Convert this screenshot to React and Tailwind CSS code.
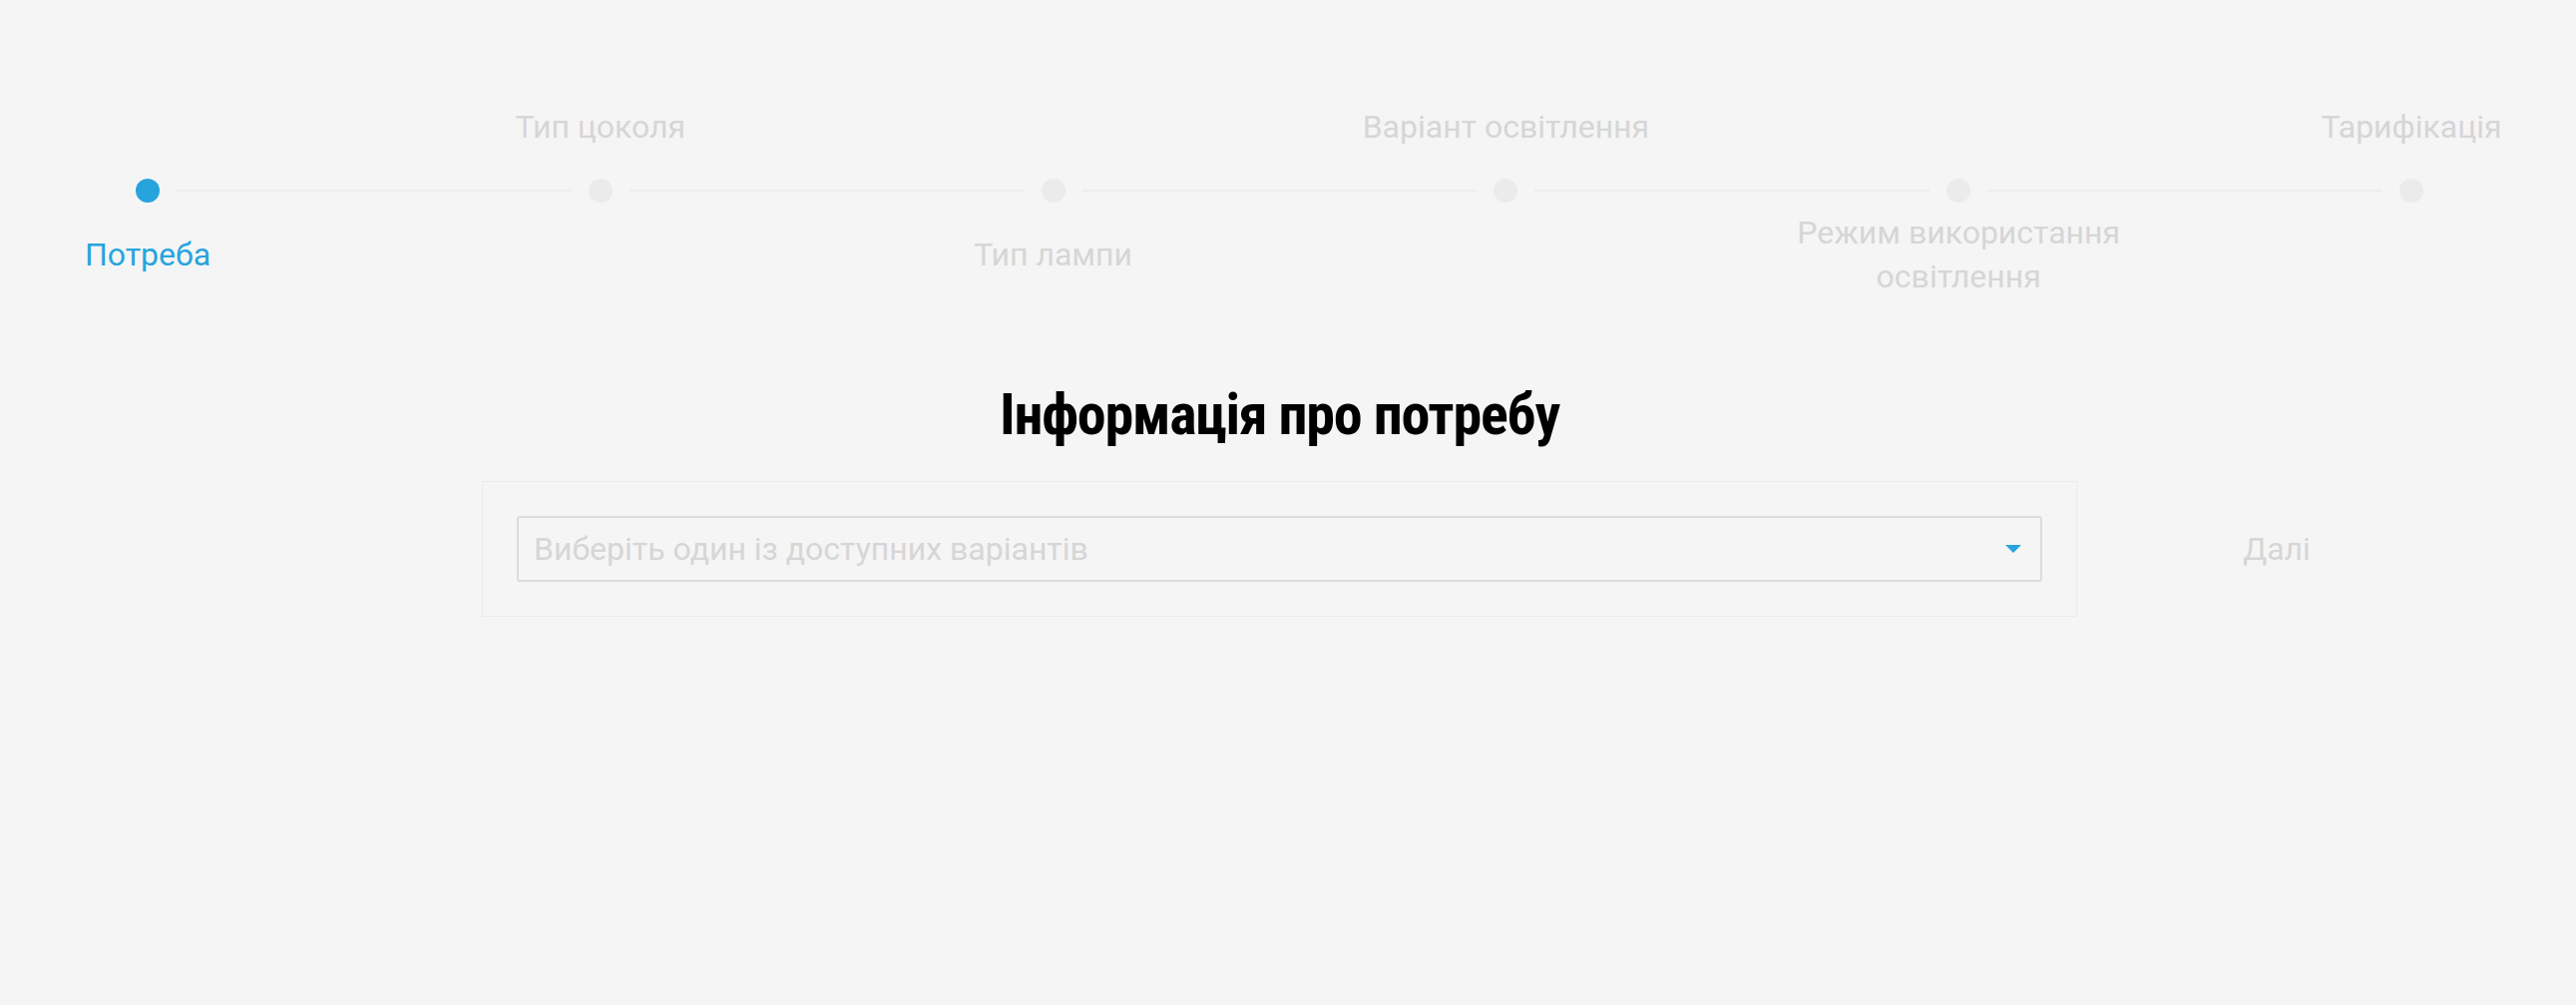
import React from 'react';

const steps = [
  { label: 'Потреба', active: true, below: true },
  { label: 'Тип цоколя', below: false },
  { label: 'Тип лампи', below: true },
  { label: 'Варіант освітлення', below: false },
  { label: 'Режим використання освітлення', below: true },
  { label: 'Тарифікація', below: false },
];

const Step = ({ label, active, below }) => {
  const text = (
    <div
      className={`w-[360px] text-center text-[32px] leading-[44px] ${
        active ? 'text-[#27a4dd]' : 'text-[#d6d6d6]'
      }`}
    >
      {label}
    </div>
  );

  return (
    <div className="flex w-6 shrink-0 flex-col items-center">
      <div className="flex h-[104px] items-center justify-center">{!below && text}</div>
      <div className={`h-6 w-6 rounded-full ${active ? 'bg-[#27a4dd]' : 'bg-[#ebebeb]'}`} />
      <div className="flex h-[104px] items-center justify-center">{below && text}</div>
    </div>
  );
};

const App = () => {
  return (
    <div className="min-h-screen w-full bg-[#f5f5f5] pr-[17px] font-['Roboto',sans-serif]">
      {/* Stepper */}
      <div className="flex items-start px-[136px] pt-[75px]">
        {steps.map((s, i) => (
          <React.Fragment key={s.label}>
            <Step {...s} />
            {i < steps.length - 1 && (
              <div className="mx-[17px] mt-[115px] h-[2px] flex-1 bg-[#ededed]" />
            )}
          </React.Fragment>
        ))}
      </div>

      {/* Title */}
      <h1 className="mt-[79px] text-center font-['Liberation_Sans_Narrow','Roboto_Condensed','Roboto',sans-serif] text-[58px] font-bold leading-none tracking-[-1.2px] text-black">
        Інформація про потребу
      </h1>

      {/* Form row */}
      <div className="mt-[38px] grid grid-cols-[1fr_1599px_1fr]">
        <div />
        <div className="border border-[#ebebeb] p-[34px]">
          <div className="flex h-[66px] items-center justify-between rounded-[3px] border-2 border-[#dcdcdc] pl-[15px] pr-[19px]">
            <span className="text-[32px] text-[#d6d6d6]">Виберіть один із доступних варіантів</span>
            <svg width="16" height="8" viewBox="0 0 16 8">
              <path d="M0 0 L16 0 L8 8 Z" fill="#27a4dd" />
            </svg>
          </div>
        </div>
        <div className="flex">
          <button className="w-[400px] cursor-pointer text-center text-[32px] text-[#d6d6d6]">Далі</button>
        </div>
      </div>
    </div>
  );
};

export default App;
